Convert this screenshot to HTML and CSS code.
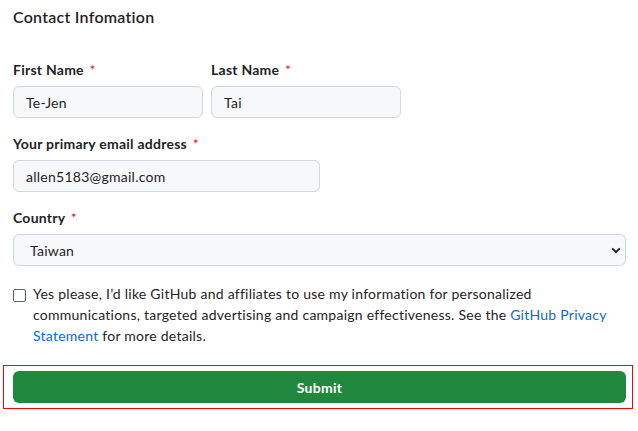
FILE: index.html
```html
<!DOCTYPE html>
<html lang="en">
<head>
<meta charset="utf-8">
<title>Contact Infomation</title>
<link rel="stylesheet" href="styles.css">
</head>
<body>
<form class="form">
  <h2 class="title">Contact Infomation</h2>

  <div class="row">
    <div class="field">
      <label class="label">First Name <span class="req">*</span></label>
      <input class="input name" type="text" value="Te-Jen">
    </div>
    <div class="field">
      <label class="label">Last Name <span class="req">*</span></label>
      <input class="input name" type="text" value="Tai">
    </div>
  </div>

  <div class="field">
    <label class="label">Your primary email address <span class="req">*</span></label>
    <input class="input email" type="email" value="allen5183@gmail.com">
  </div>

  <div class="field">
    <label class="label">Country <span class="req">*</span></label>
    <div class="select-wrap">
      <select class="input select">
        <option>Taiwan</option>
      </select>
      <svg class="chevron" width="10" height="7" viewBox="0 0 10 7"><path d="M1.2 1.4 L5 5.2 L8.8 1.4" fill="none" stroke="#1f2328" stroke-width="2"/></svg>
    </div>
  </div>

  <div class="consent">
    <input class="check" type="checkbox">
    <p class="consent-text">Yes please, I’d like GitHub and affiliates to use my information for personalized communications, targeted advertising and campaign effectiveness. See the <a class="link" href="#">GitHub Privacy Statement</a> for more details.</p>
  </div>

  <div class="submit-box">
    <button class="submit" type="button">Submit</button>
  </div>
</form>
</body>
</html>
```
FILE: styles.css
```css
* { box-sizing: border-box; }
html, body { margin: 0; background: #ffffff; }
body {
  font-family: Lato, "Noto Sans", sans-serif;
  font-size: 14px;
  letter-spacing: 0.25px;
  color: #1f2328;
}
.form {
  display: flex;
  flex-direction: column;
  padding: 5px 12px 0 13px;
}
.title {
  margin: 0;
  font-size: 16px;
  font-weight: 600;
  letter-spacing: 0.25px;
  line-height: 24px;
  height: 24px;
}
.row {
  display: flex;
  gap: 8px;
  margin-top: 31px;
}
.field {
  display: flex;
  flex-direction: column;
  gap: 6px;
  margin-bottom: 16px;
}
.label {
  font-weight: 700;
  line-height: 20px;
  height: 20px;
}
.req { color: #cf222e; font-weight: 400; margin-left: 2px; }
.input {
  height: 32px;
  border: 1px solid #d0d7de;
  border-radius: 6px;
  background: #f6f8fa;
  font-family: inherit;
  font-size: 14px;
  letter-spacing: 0.25px;
  color: #1f2328;
  padding: 0 12px;
  outline: none;
}
.name { width: 190px; }
.email { width: 307px; }
.select-wrap { position: relative; width: 613px; }
.select {
  width: 100%;
  appearance: none;
  -webkit-appearance: none;
  padding-left: 16px;
}
.chevron {
  position: absolute;
  right: 5px;
  top: 13px;
}
.consent {
  display: flex;
  gap: 7px;
  align-items: flex-start;
  margin-top: 1px;
}
.check {
  appearance: none;
  -webkit-appearance: none;
  width: 13px;
  height: 13px;
  margin: 6px 0 0 0;
  border: 1px solid #5b6167;
  border-radius: 2px;
  background: #fff;
  flex: none;
}
.consent-text {
  margin: 0;
  line-height: 21px;
  flex: 1;
}
.link { color: #0969da; text-decoration: none; }
.submit-box {
  margin: 19px -7px 0 -10px;
  border: 1px solid #ff0000;
  padding: 5px 6px 5px 9px;
}
.submit {
  display: block;
  width: 100%;
  height: 32px;
  border: 0;
  border-radius: 6px;
  background: #1f883d;
  color: #ffffff;
  font-family: inherit;
  font-size: 14px;
  font-weight: 700;
  letter-spacing: 0.25px;
}
```
